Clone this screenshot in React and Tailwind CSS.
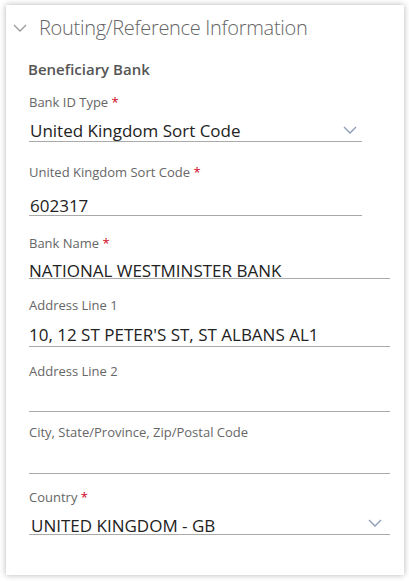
import React from "react";

const Chevron = ({ className, color = "#8a9bb5" }) => (
    <svg className={className} viewBox="0 0 14 8" fill="none">
        <path d="M1 1l6 6 6-6" stroke={color} strokeWidth="1.3" />
    </svg>
);

const Label = ({ text, required, className = "" }) => (
    <div className={`h-[18px] text-[13px] leading-[18px] text-[#666] ${className}`}>
        {text}
        {required && <span className="text-[#d0021b]"> *</span>}
    </div>
);

const App = () => {
    return (
        <div className="w-[409px] h-[581px] bg-white pt-[5px] pl-[6px]" style={{ fontFamily: '"Open Sans", sans-serif' }}>
            <div className="w-[398px] h-[570px] bg-white shadow-[0_0_6px_rgba(0,0,0,0.3)] flex flex-col">
                <div className="flex items-center h-[28px] mt-[9px]">
                    <Chevron className="w-[14px] h-[8px] ml-[7px]" color="#9a9a9a" />
                    <span className="ml-[12px] text-[20px] leading-[28px] font-light tracking-[-0.3px] text-[#666]">
                        Routing/Reference Information
                    </span>
                </div>
                <div className="mt-[17px] ml-[22px] h-[20px] text-[15px] leading-[20px] font-semibold text-[#555]">
                    Beneficiary Bank
                </div>

                <div className="flex flex-col ml-[23px]">
                    <Label text="Bank ID Type" required className="mt-[14px]" />
                    <div className="mt-[11px] w-[333px] flex items-end justify-between border-b border-[#aaa] pb-[1px] pl-[1px] text-[17px] leading-[18px] text-[#222]">
                        <span>United Kingdom Sort Code</span>
                        <Chevron className="w-[14px] h-[8px] mr-[5px] mb-[6px]" />
                    </div>

                    <Label text="United Kingdom Sort Code" required className="mt-[21px]" />
                    <div className="mt-[16px] w-[333px] border-b border-[#aaa] pl-[1px] text-[17px] leading-[18px] text-[#222]">
                        602317
                    </div>

                    <Label text="Bank Name" required className="mt-[18px]" />
                    <div className="mt-[12px] w-[361px] border-b border-[#aaa] text-[17px] leading-[14px] text-[#222]">
                        NATIONAL WESTMINSTER BANK
                    </div>

                    <Label text="Address Line 1" className="mt-[17px]" />
                    <div className="mt-[12px] w-[361px] border-b border-[#aaa] pb-[2px] text-[17px] leading-[18px] text-[#222]">
                        10, 12 ST PETER'S ST, ST ALBANS AL1
                    </div>

                    <Label text="Address Line 2" className="mt-[15px]" />
                    <div className="w-[361px] h-[32px] border-b border-[#aaa]" />

                    <Label text="City, State/Province, Zip/Postal Code" className="mt-[11px]" />
                    <div className="w-[361px] h-[33px] border-b border-[#aaa]" />

                    <Label text="Country" required className="mt-[14px]" />
                    <div className="mt-[12px] w-[361px] flex items-end justify-between border-b border-[#aaa] text-[17px] leading-[16px] text-[#222]">
                        <span className="pl-[2px]">UNITED KINGDOM - GB</span>
                        <Chevron className="w-[14px] h-[8px] mr-[8px] mb-[7px]" />
                    </div>
                </div>
            </div>
        </div>
    );
};

export default App;
